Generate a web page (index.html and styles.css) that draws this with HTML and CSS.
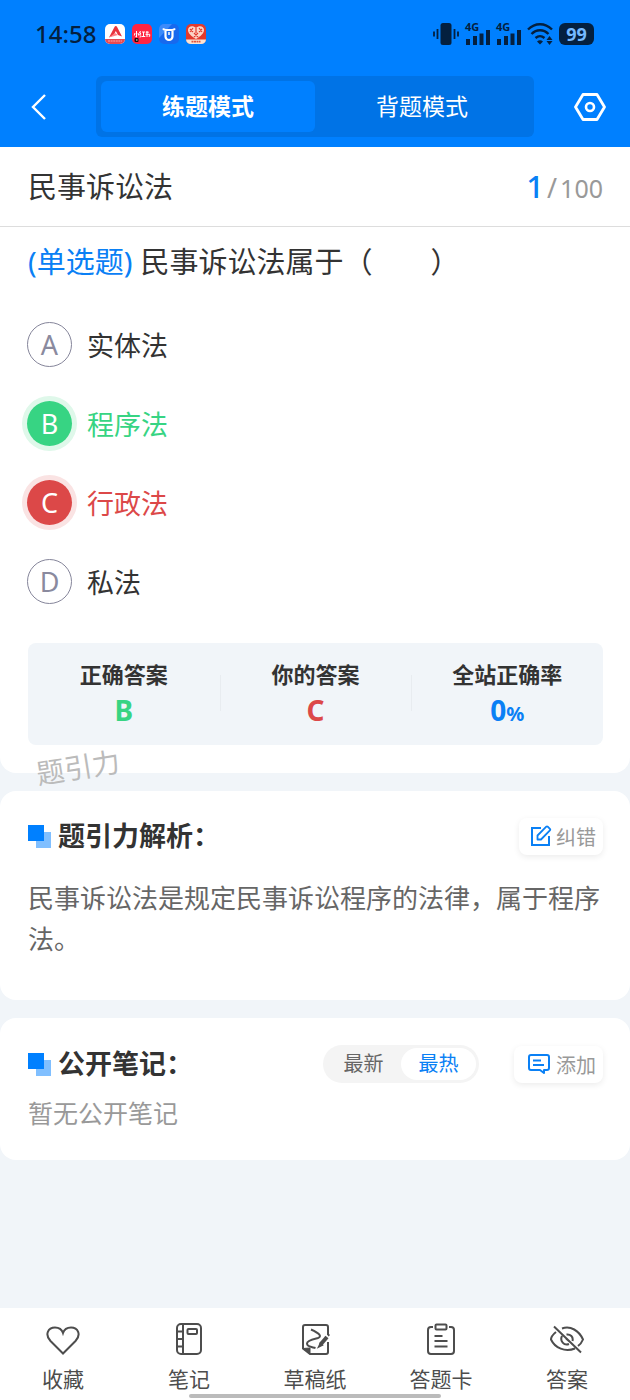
FILE: index.html
```html
<!DOCTYPE html>
<html lang="zh-CN">
<head>
<meta charset="utf-8">
<meta name="viewport" content="width=device-width, initial-scale=1">
<title>民事诉讼法</title>
<link rel="stylesheet" href="styles.css">
</head>
<body>
<div class="app">
  <header class="top">
    <div class="status">
      <div class="status-left">
        <time class="clock">14:58</time>
        <svg class="app-icon" viewBox="0 0 20 20"><rect width="20" height="20" rx="5" fill="#fff"/><path d="M0 15h20a5 5 0 0 1-5 5H5a5 5 0 0 1-5-5z" fill="#e84a52"/><path d="M3 17h14" stroke="#ffa5a8" stroke-dasharray="2 .6"/><path d="M4 13.500L9.500 3c.6-1.300 2-1.300 2.600 0L17 12.500l-4-1.500-2.200-4-2 4z" fill="#e8343e"/><path d="M4 13.500l6-4.500 3 2z" fill="#ff8388"/></svg>
        <svg class="app-icon" viewBox="0 0 20 20"><rect width="20" height="20" rx="5" fill="#ff2442"/><path d="M4.500 7v6l-1-.5M3 9l-.7 2.500M6 9l.7 2.500M8.500 7L7.400 9h1.500L7.600 11h1.600M7.500 13l2-.4M10 8h3M11.500 8v4.500M9.800 12.500h3.500M13.800 8.200h3M15 7v6M13.500 10.300h4.200v2h-1" fill="none" stroke="#fff" stroke-width="1"/><rect x="2.500" y="14" width="4" height="4" rx="1" fill="#210b10"/><path d="M4 16h1.500" stroke="#fff"/></svg>
        <svg class="app-icon" viewBox="0 0 20 20"><rect width="20" height="20" rx="5" fill="#1769ee"/><path d="M0 5a5 5 0 0 1 5-5h8L0 14z" fill="#3c8bfa"/><path d="M4 4.500c1 1.500 2 1.500 3 1.500h6c1 0 2 0 3-1.500M6.500 6v6.500a3.500 3.500 0 0 0 7 0V6" fill="none" stroke="#fff" stroke-width="2.200"/><path d="M10 8v3" stroke="#fff" stroke-width="1.500"/></svg>
        <svg class="app-icon" viewBox="0 0 20 20"><rect width="20" height="20" rx="5" fill="#e23a2d"/><path d="M0 15.500h20a5 5 0 0 1-5 4.500H5a5 5 0 0 1-5-4.500z" fill="#fbe3d2"/><path d="M10 15C5 12 2 9 2 6c0-4 5-5 8-2 3-3 8-2 8 2 0 3-3 6-8 9z" fill="#fbd6c8"/><path d="M4 5l3 3m0-4L4 8m9-4l3 4m0-3l-3 3m-5 1l4 4m0-4l-4 4M10 4v5" stroke="#e23a2d" stroke-width="1.200"/><path d="M5.500 17.700h9" stroke="#e2543d" stroke-width="1.800" stroke-dasharray="2 .5"/></svg>
      </div>
      <div class="status-right">
        <svg class="vibrate" viewBox="0 0 26 22"><rect x="7.500" y="0" width="11" height="22" rx="2.500"/><path d="M1 8.500v5M4.500 6v10M21.500 6v10M25 8.500v5" stroke="#04203f" stroke-width="1.800"/></svg>
        <span class="signal"><small>4G</small><svg viewBox="0 0 25 22"><path d="M3 16v6M10 13v9M16.500 10.500v11.500M23 7v15" stroke="#04203f" stroke-width="4"/></svg></span>
        <span class="signal"><small>4G</small><svg viewBox="0 0 25 22"><path d="M3 16v6M10 13v9M16.500 10.500v11.500M23 7v15" stroke="#04203f" stroke-width="4"/></svg></span>
        <svg class="wifi" viewBox="0 0 26 22"><path d="M1 6.500c7-7 17-7 24 0M4.500 11c5-5 12-5 17 0M8.500 15c3-2.500 6-2.500 9 0" fill="none" stroke="#04203f" stroke-width="2.400"/><path d="M10 18.500c2-1.800 4-1.800 6 0L13 21.500zM19.500 17l3-4 3 4zM19.500 18l3 4 3-4z"/></svg>
        <span class="battery">99</span>
      </div>
    </div>
    <div class="toolbar">
      <button class="icon-button" type="button" aria-label="返回"><svg class="back" viewBox="0 0 16 28"><path d="M14 2L2 14l12 12" fill="none" stroke="#fff" stroke-width="2.400"/></svg></button>
      <div class="modes">
        <button class="mode mode-active" type="button">练题模式</button>
        <button class="mode" type="button">背题模式</button>
      </div>
      <button class="icon-button" type="button" aria-label="设置"><svg class="settings" viewBox="0 0 32 28"><path d="M9 1.500h14L30.500 14 23 26.500H9L1.500 14z" fill="none" stroke="#fff" stroke-width="2.800" stroke-linejoin="round"/><circle cx="16" cy="14" r="4" fill="none" stroke="#fff" stroke-width="2.600"/></svg></button>
    </div>
  </header>

  <main class="content">
    <section class="card question-card">
      <div class="subject">
        <h1>民事诉讼法</h1>
        <p class="progress"><b>1</b><span>/</span>100</p>
      </div>
      <fieldset class="question">
        <legend><span class="kind">(单选题)</span>民事诉讼法属于（　　）</legend>
        <label class="option"><span class="mark"><input type="radio" name="answer"><span>A</span></span>实体法</label>
        <label class="option option-right"><span class="mark"><input type="radio" name="answer"><span>B</span></span>程序法</label>
        <label class="option option-wrong"><span class="mark"><input type="radio" name="answer" checked><span>C</span></span>行政法</label>
        <label class="option"><span class="mark"><input type="radio" name="answer"><span>D</span></span>私法</label>
      </fieldset>
      <dl class="result">
        <div><dt>正确答案</dt><dd class="green">B</dd></div>
        <div><dt>你的答案</dt><dd class="red">C</dd></div>
        <div><dt>全站正确率</dt><dd class="blue">0<small>%</small></dd></div>
      </dl>
      <span class="watermark">题引力</span>
    </section>

    <section class="card analysis">
      <div class="card-head">
        <svg class="squares" viewBox="0 0 23 23"><path d="M8 7h15v16H8z" fill="#80bfff"/><path d="M0 0h16v16H0z" fill="#0080ff"/></svg>
        <h2>题引力解析：</h2>
        <button class="action" type="button"><svg viewBox="0 0 22 22"><path d="M11 3H2v17h17v-9" fill="none" stroke="#0a80f5" stroke-width="2"/><path d="M7.500 14.500v-4l8.800-8.800a1 1 0 0 1 1.400 0l2.200 2.200a1 1 0 0 1 0 1.400L11 14.500z" fill="none" stroke="#0a80f5" stroke-width="1.800" stroke-linejoin="round"/></svg>纠错</button>
      </div>
      <p class="explanation">民事诉讼法是规定民事诉讼程序的法律，属于程序法。</p>
    </section>

    <section class="card notes">
      <div class="card-head">
        <svg class="squares" viewBox="0 0 23 23"><path d="M8 7h15v16H8z" fill="#80bfff"/><path d="M0 0h16v16H0z" fill="#0080ff"/></svg>
        <h2>公开笔记：</h2>
        <div class="sort">
          <button type="button">最新</button>
          <button class="sort-active" type="button">最热</button>
        </div>
        <button class="action" type="button"><svg viewBox="0 0 22 22"><path d="M3 2h16q2 0 2 2v11q0 2-2 2h-3v3l-4-3H3q-2 0-2-2V4q0-2 2-2z" fill="none" stroke="#0a80f5" stroke-width="2" stroke-linejoin="round"/><path d="M5 7.500h8M5 12h11" stroke="#0a80f5" stroke-width="2"/></svg>添加</button>
      </div>
      <p class="empty">暂无公开笔记</p>
    </section>
  </main>

  <nav class="tabs">
    <button type="button"><svg viewBox="0 0 34 34"><path d="M17 31.500L4.500 19C-1.500 12.500 2 5.500 9 5.500c4 0 7 2.500 8 5.500 1-3 4-5.500 8-5.500 7 0 10.500 7 4.500 13.500z"/></svg>收藏</button>
    <button type="button"><svg viewBox="0 0 34 34"><rect x="5" y="2" width="24" height="30" rx="4"/><path d="M11 2v30M5 9.500h6M5 17h6M5 24.500h6"/><rect x="15.500" y="7" width="9.500" height="5" rx="1"/></svg>笔记</button>
    <button type="button"><svg viewBox="0 0 34 34"><path d="M30 13V5q0-2-2-2H7Q5 3 5 5v21.500l7 5.500h16q2 0 2-2V20"/><path d="M5 26.500l7-.5v6z" fill="#4d4d4d" stroke-width="1"/><path d="M13 7.500c9 4 11 7 7 8.500-4 1-11 2-11 5.500 0 3.500 5 3.500 8.500 4.500"/><path d="M22.500 22.500l6.500-7.500" stroke-width="4"/><path d="M20.500 25l2-4 2 2zM30 14l1.500-1.500" fill="#4d4d4d" stroke-width="1.500"/></svg>草稿纸</button>
    <button type="button"><svg viewBox="0 0 34 34"><path d="M9 5H7Q4 5 4 8v21q0 3 3 3h20q3 0 3-3V8q0-3-3-3h-2"/><rect x="11.500" y="2.500" width="11" height="5" rx="1"/><path d="M10.500 14h8M10.500 19h13M10.500 24.500h13"/></svg>答题卡</button>
    <button type="button"><svg viewBox="0 0 34 34"><path d="M6 10c-3 2.500-5 5-5 7.500 4 8.500 14 13 24 9M12 6.500c8.500-3 17 2 21 11-1 2.500-3 5-5 6.500M4 4.500l27 26M12 14c-2.500 5 2 10 7 8M16.500 12.500c4-.5 7 2.500 6 6.500M16 16.500l3.500 3"/></svg>答案</button>
  </nav>
  <div class="home-bar"></div>
</div>
</body>
</html>
```
FILE: styles.css
```css
* { box-sizing: border-box; }
body, h1, h2, p, dl, dd, fieldset, legend { margin: 0; padding: 0; }
body {
  background: #f1f5f9;
  color: #333;
  font-family: "Noto Sans", "Noto Sans CJK SC", sans-serif;
}
button {
  margin: 0;
  padding: 0;
  border: 0;
  background: none;
  color: inherit;
  font: inherit;
  cursor: pointer;
}
svg { display: block; flex: none; }
.app {
  display: flex;
  flex-direction: column;
  min-height: 100vh;
  position: relative;
}

/* header */
.top { background: #0080ff; padding-bottom: 10px; }
.status {
  display: flex;
  justify-content: space-between;
  align-items: center;
  height: 68px;
  padding: 0 36px 0 35px;
  color: #04203f;
}
.status-left { display: flex; align-items: center; gap: 7px; }
.status-right { display: flex; align-items: center; gap: 6px; fill: #04203f; }
.clock { font-size: 24px; font-weight: 500; line-height: 32px; margin-right: 2px; }
.app-icon { width: 20px; height: 20px; }
.vibrate { width: 26px; height: 22px; }
.signal { position: relative; }
.signal svg { width: 25px; height: 22px; }
.signal small {
  position: absolute;
  left: 0;
  top: -2px;
  font-size: 11px;
  font-weight: 700;
  line-height: 12px;
}
.wifi { width: 26px; height: 22px; }
.battery {
  width: 35px;
  border-radius: 6px;
  background: #04203f;
  color: #75b9ff;
  font-size: 18px;
  font-weight: 700;
  line-height: 22px;
  text-align: center;
}
.toolbar {
  display: flex;
  align-items: center;
  justify-content: space-between;
  padding: 8px 24px 0 24px;
}
.icon-button { display: flex; align-items: center; width: 32px; height: 44px; }
.icon-button:first-child { padding-left: 7px; }
.back { width: 16px; height: 28px; }
.settings { width: 32px; height: 28px; }
.modes {
  display: flex;
  flex: 1;
  margin: 0 40px;
  padding: 5px;
  border-radius: 6px;
  background: #0073e6;
}
.mode {
  flex: 1;
  border-radius: 6px;
  color: #fff;
  font-size: 23px;
  line-height: 51px;
}
.mode-active { background: #0080ff; font-weight: 700; }

/* cards */
.content { display: grid; gap: 18px; }
.card { background: #fff; border-radius: 16px; padding: 0 27px 0 28px; }
.question-card { position: relative; border-radius: 0 0 16px 16px; padding-bottom: 28px; }
.subject {
  display: flex;
  justify-content: space-between;
  align-items: center;
  height: 80px;
  margin: 0 -27px 0 -28px;
  padding: 0 27px 0 28px;
  border-bottom: 1px solid #ddd;
}
h1 { font-size: 29px; font-weight: 400; line-height: 40px; }
.progress { color: #999; font-size: 25px; line-height: 38px; }
.progress b { color: #0a80f5; font-size: 31px; font-weight: 500; }
.progress span { margin: 0 3px; font-size: 27px; }
.question { border: 0; }
legend { padding: 14px 0 39px; font-size: 29px; line-height: 42px; }
.kind { margin-right: 8px; color: #0a80f5; }
.option {
  display: flex;
  align-items: center;
  gap: 15px;
  height: 45px;
  margin: 0 -1px 34px;
  font-size: 27px;
}
.mark { display: grid; place-items: center; color: #8a8a9e; line-height: 44px; }
.mark > * { grid-area: 1 / 1; }
.mark span { position: relative; }
.mark input {
  appearance: none;
  width: 45px;
  height: 45px;
  margin: 0;
  border: 1px solid #85859a;
  border-radius: 50%;
}
.option-right { color: #37d483; }
.option-wrong { color: #dc4848; }
.option-right .mark, .option-wrong .mark { color: #fff; }
.option-right input { border: 0; background: #37d483; box-shadow: 0 0 0 5px #dff8ea; }
.option-wrong input { border: 0; background: #dc4848; box-shadow: 0 0 0 5px #fae3e3; }
.result {
  display: grid;
  grid-template-columns: repeat(3, 1fr);
  margin-top: 5px;
  padding: 14px 0 16px;
  border-radius: 8px;
  background: #f1f5f9;
  text-align: center;
}
.result div + div {
  background: linear-gradient(#e8ecf0, #e8ecf0) left center / 1px 36px no-repeat;
}
.result dt { font-size: 22px; font-weight: 700; line-height: 34px; }
.result dd { font-size: 28px; font-weight: 700; line-height: 38px; }
.result small { font-size: 20px; line-height: 20px; }
.green { color: #37d483; }
.red { color: #dc4848; }
.blue { color: #0a80f5; }
.watermark {
  position: absolute;
  left: 36px;
  bottom: -14px;
  color: #bbb;
  font-size: 28px;
  line-height: 40px;
  transform: rotate(-9deg);
}
.card-head { display: flex; align-items: center; height: 38px; }
.squares { width: 23px; height: 23px; margin-right: 7px; }
h2 { flex: 1; font-size: 27px; font-weight: 700; line-height: 38px; white-space: nowrap; }
.action {
  display: flex;
  align-items: center;
  gap: 4px;
  height: 37px;
  padding: 0 7px 0 11px;
  border-radius: 8px;
  box-shadow: 0 2px 6px #00000014;
  color: #999;
  font-size: 20px;
}
.action svg { width: 22px; height: 22px; }
.analysis { padding-top: 26px; padding-bottom: 40px; }
.explanation { margin-top: 23px; color: #666; font-size: 26px; line-height: 41px; }
.notes { padding-top: 27px; padding-bottom: 28px; }
.notes .action { gap: 6px; padding-left: 14px; }
.sort {
  display: flex;
  margin-right: 35px;
  padding: 3px;
  border-radius: 19px;
  background: #f4f4f4;
  color: #666;
  font-size: 20px;
}
.sort button { width: 75px; border-radius: 16px; line-height: 32px; }
.sort .sort-active { background: #fff; color: #0a80f5; }
.empty { margin-top: 11px; color: #999; font-size: 25px; line-height: 38px; }

/* bottom tabs */
.tabs {
  display: grid;
  grid-template-columns: repeat(5, 1fr);
  margin-top: auto;
  padding: 14px 0 5px;
  background: #fff;
  color: #4d4d4d;
}
.tabs button {
  display: grid;
  justify-items: center;
  gap: 7px;
  font-size: 21px;
  line-height: 32px;
}
.tabs svg {
  width: 34px;
  height: 34px;
  fill: none;
  stroke: #4d4d4d;
  stroke-width: 2;
}
.home-bar {
  position: absolute;
  bottom: 2px;
  left: 30%;
  width: 40%;
  height: 4px;
  border-radius: 2px;
  background: #bbb;
}
```
